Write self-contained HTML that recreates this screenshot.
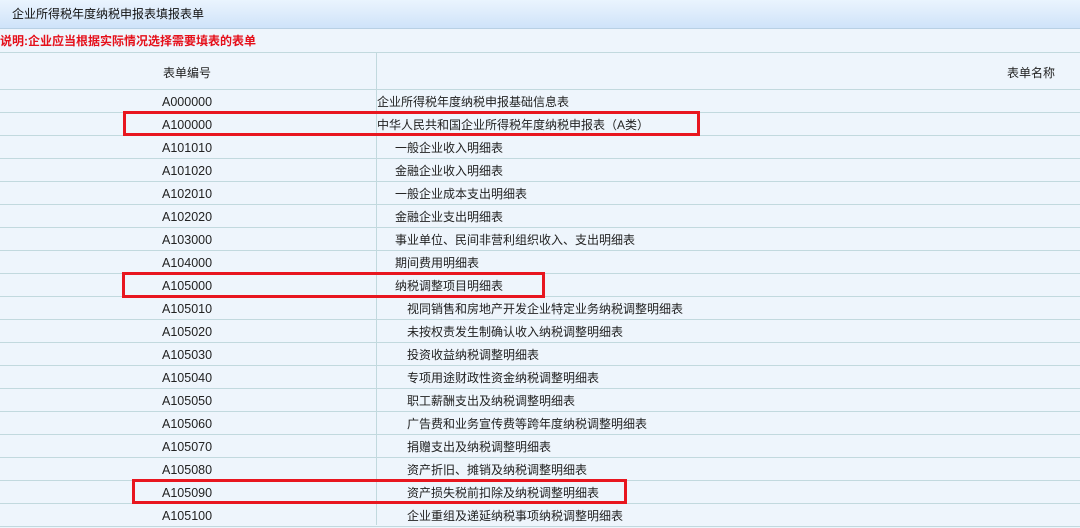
<!DOCTYPE html>
<html><head><meta charset="utf-8"><style>
body{margin:0;width:1080px;height:525px;overflow:hidden;background:#eef5fc;font-family:"Liberation Sans","Noto Sans CJK SC",sans-serif;font-size:12px;color:#222;position:relative}
.t{position:absolute;left:0;top:0;width:1080px;height:29px;background:linear-gradient(#eaf4fe,#cfe3f9);border-bottom:1px solid #b8d0e4;box-sizing:border-box;padding-left:12px;line-height:29px;font-size:12px;color:#111}
.n{position:absolute;left:0;top:29px;height:23px;line-height:25px;color:#e5101a;font-weight:bold;font-size:12px}
.h{position:absolute;top:52px;left:0;width:1080px;height:38px;border-top:1px solid #c2d9de;border-bottom:1px solid #c2d9de;box-sizing:border-box}
.r{position:absolute;left:0;width:1080px;height:23px;border-bottom:1px solid #c2d9de;box-sizing:border-box;line-height:24px}
.c{position:absolute;left:162px;font-size:12.5px}
.m{position:absolute}
.v{position:absolute;left:376px;top:52px;width:1px;height:473px;background:#c2d9de}
.b{position:absolute;border:3.5px solid #e8161f;box-sizing:border-box}
</style></head><body>
<div class="t">企业所得税年度纳税申报表填报表单</div>
<div class="n">说明:企业应当根据实际情况选择需要填表的表单</div>
<div class="h"><span style="position:absolute;left:163px;top:11px">表单编号</span><span style="position:absolute;left:1007px;top:11px">表单名称</span></div>
<div class="r" style="top:90px"><span class="c">A000000</span><span class="m" style="left:377px">企业所得税年度纳税申报基础信息表</span></div>
<div class="r" style="top:113px"><span class="c">A100000</span><span class="m" style="left:377px">中华人民共和国企业所得税年度纳税申报表（A类）</span></div>
<div class="r" style="top:136px"><span class="c">A101010</span><span class="m" style="left:395px">一般企业收入明细表</span></div>
<div class="r" style="top:159px"><span class="c">A101020</span><span class="m" style="left:395px">金融企业收入明细表</span></div>
<div class="r" style="top:182px"><span class="c">A102010</span><span class="m" style="left:395px">一般企业成本支出明细表</span></div>
<div class="r" style="top:205px"><span class="c">A102020</span><span class="m" style="left:395px">金融企业支出明细表</span></div>
<div class="r" style="top:228px"><span class="c">A103000</span><span class="m" style="left:395px">事业单位、民间非营利组织收入、支出明细表</span></div>
<div class="r" style="top:251px"><span class="c">A104000</span><span class="m" style="left:395px">期间费用明细表</span></div>
<div class="r" style="top:274px"><span class="c">A105000</span><span class="m" style="left:395px">纳税调整项目明细表</span></div>
<div class="r" style="top:297px"><span class="c">A105010</span><span class="m" style="left:407px">视同销售和房地产开发企业特定业务纳税调整明细表</span></div>
<div class="r" style="top:320px"><span class="c">A105020</span><span class="m" style="left:407px">未按权责发生制确认收入纳税调整明细表</span></div>
<div class="r" style="top:343px"><span class="c">A105030</span><span class="m" style="left:407px">投资收益纳税调整明细表</span></div>
<div class="r" style="top:366px"><span class="c">A105040</span><span class="m" style="left:407px">专项用途财政性资金纳税调整明细表</span></div>
<div class="r" style="top:389px"><span class="c">A105050</span><span class="m" style="left:407px">职工薪酬支出及纳税调整明细表</span></div>
<div class="r" style="top:412px"><span class="c">A105060</span><span class="m" style="left:407px">广告费和业务宣传费等跨年度纳税调整明细表</span></div>
<div class="r" style="top:435px"><span class="c">A105070</span><span class="m" style="left:407px">捐赠支出及纳税调整明细表</span></div>
<div class="r" style="top:458px"><span class="c">A105080</span><span class="m" style="left:407px">资产折旧、摊销及纳税调整明细表</span></div>
<div class="r" style="top:481px"><span class="c">A105090</span><span class="m" style="left:407px">资产损失税前扣除及纳税调整明细表</span></div>
<div class="r" style="top:504px"><span class="c">A105100</span><span class="m" style="left:407px">企业重组及递延纳税事项纳税调整明细表</span></div>
<div class="v"></div>
<div class="b" style="left:123px;top:111px;width:577px;height:25px"></div>
<div class="b" style="left:122px;top:272px;width:423px;height:26px"></div>
<div class="b" style="left:132px;top:479px;width:495px;height:25px"></div>
</body></html>
